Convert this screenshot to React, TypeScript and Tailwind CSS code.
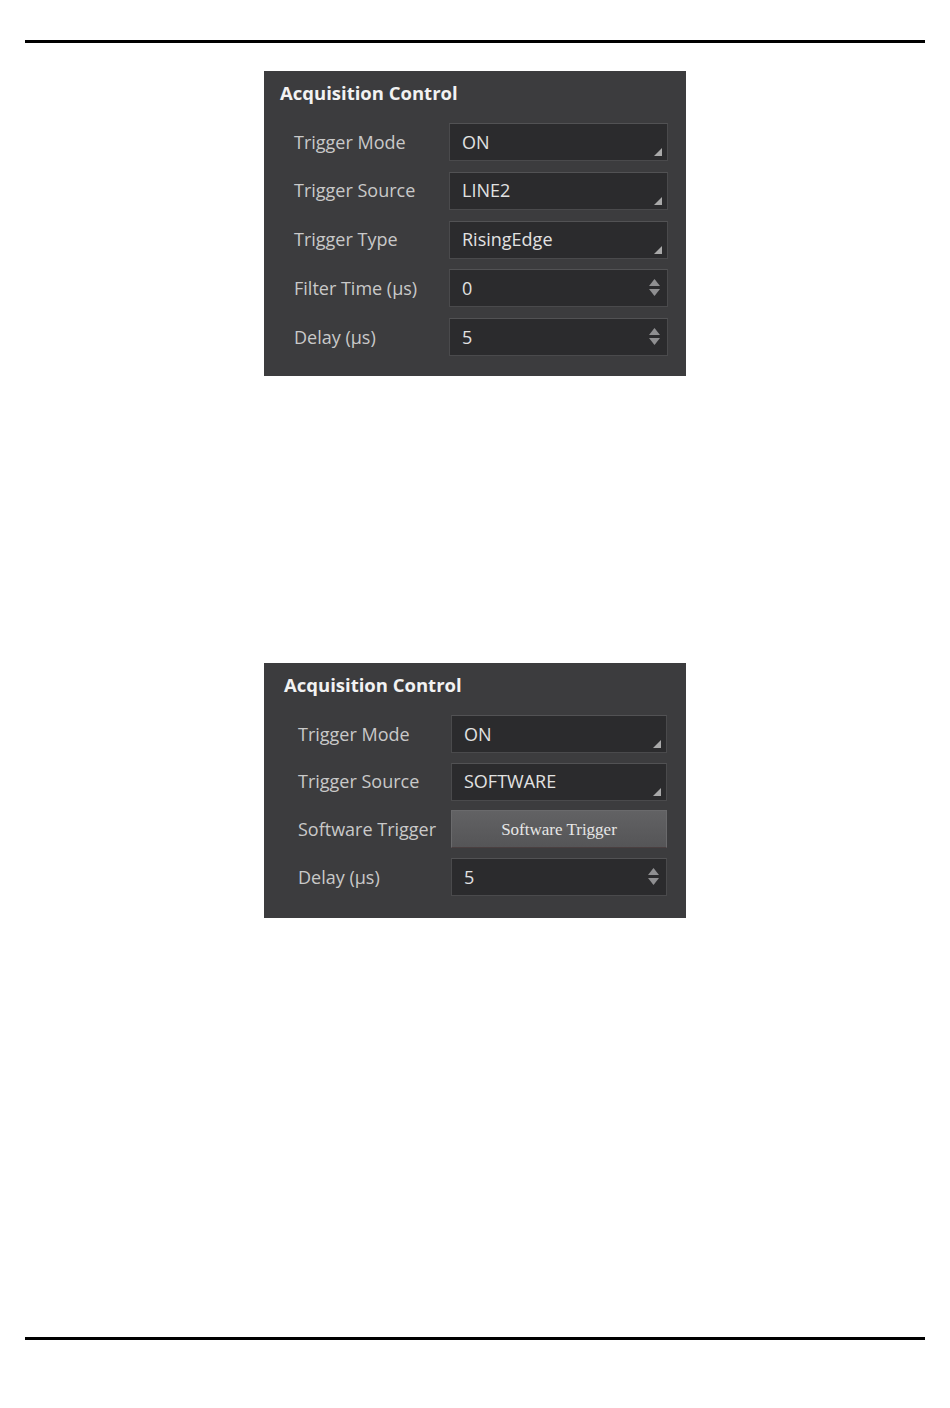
import React from 'react';

type Row =
  | { label: string; kind: 'select'; value: string }
  | { label: string; kind: 'spin'; value: string }
  | { label: string; kind: 'button'; value: string };

const firstPanel: Row[] = [
  { label: 'Trigger Mode', kind: 'select', value: 'ON' },
  { label: 'Trigger Source', kind: 'select', value: 'LINE2' },
  { label: 'Trigger Type', kind: 'select', value: 'RisingEdge' },
  { label: 'Filter Time (µs)', kind: 'spin', value: '0' },
  { label: 'Delay (µs)', kind: 'spin', value: '5' },
];

const secondPanel: Row[] = [
  { label: 'Trigger Mode', kind: 'select', value: 'ON' },
  { label: 'Trigger Source', kind: 'select', value: 'SOFTWARE' },
  { label: 'Software Trigger', kind: 'button', value: 'Software Trigger' },
  { label: 'Delay (µs)', kind: 'spin', value: '5' },
];

function CornerArrow() {
  return (
    <svg width="8" height="8" viewBox="0 0 8 8" className="self-end mb-[4px]">
      <polygon points="8,0 8,8 0,8" fill="#a9a9a9" />
    </svg>
  );
}

function SpinArrows() {
  return (
    <svg width="11" height="18" viewBox="0 0 11 18">
      <polygon points="5.5,0 11,7 0,7" fill="#8f8f91" />
      <polygon points="0,10 11,10 5.5,17" fill="#8f8f91" />
    </svg>
  );
}

function Field({ row, rowH }: { row: Row; rowH: string }) {
  if (row.kind === 'button') {
    return (
      <div
        className={`${rowH} flex items-center justify-center border border-[#6a6a6c] border-b-[#4a3f40] bg-gradient-to-b from-[#626264] to-[#555557] text-[17px] text-[#e6e6e6]`}
        style={{ fontFamily: '"Liberation Serif", serif' }}
      >
        {row.value}
      </div>
    );
  }
  return (
    <div
      className={`${rowH} flex items-center justify-between border border-[#4a4a4c] border-t-[#525254] bg-[#2b2b2d] pl-3 pr-[5px]`}
    >
      <span className="text-[18px] text-[#e2e2e2]">{row.value}</span>
      {row.kind === 'select' ? <CornerArrow /> : <div className="pr-[2px]"><SpinArrows /></div>}
    </div>
  );
}

function Panel({
  rows,
  titlePad,
  labelPad,
  fieldX,
  fieldW,
  rowH,
  rowGap,
  bottomPad,
}: {
  rows: Row[];
  titlePad: string;
  labelPad: string;
  fieldX: string;
  fieldW: string;
  rowH: string;
  rowGap: string;
  bottomPad: string;
}) {
  return (
    <div className={`ml-[264px] w-[422px] bg-[#3c3c3e] pt-[10px] ${bottomPad}`}>
      <div className={`${titlePad} text-[18.5px] leading-[24px] font-bold text-[#f2f2f2]`}>
        Acquisition Control
      </div>
      <div className={`mt-[18px] flex flex-col ${rowGap}`}>
        {rows.map((r) => (
          <div key={r.label} className="flex items-center">
            <div className={`${labelPad} ${fieldX} shrink-0 text-[18px] text-[#c9c9c9]`}>{r.label}</div>
            <div className={fieldW}>
              <Field row={r} rowH={rowH} />
            </div>
          </div>
        ))}
      </div>
    </div>
  );
}

export default function App() {
  return (
    <div
      className="w-[950px] h-[1408px] bg-white flex flex-col"
      style={{ fontFamily: '"Open Sans", "Noto Sans", sans-serif' }}
    >
      <div className="mt-[40px] ml-[25px] w-[900px] h-[3px] bg-black" />

      <div className="mt-[28px]">
        <Panel
          rows={firstPanel}
          titlePad="pl-[16px]"
          labelPad="pl-[30px]"
          fieldX="w-[185px]"
          fieldW="w-[219px]"
          rowH="h-[38px]"
          rowGap="gap-[10.75px]"
          bottomPad="pb-[20px]"
        />
      </div>

      <div className="mt-[287px]">
        <Panel
          rows={secondPanel}
          titlePad="pl-[20px]"
          labelPad="pl-[34px]"
          fieldX="w-[187px]"
          fieldW="w-[216px]"
          rowH="h-[38px]"
          rowGap="gap-[9.7px]"
          bottomPad="pb-[22px]"
        />
      </div>

      <div className="mt-[419px] ml-[25px] w-[900px] h-[3px] bg-black" />
    </div>
  );
}
